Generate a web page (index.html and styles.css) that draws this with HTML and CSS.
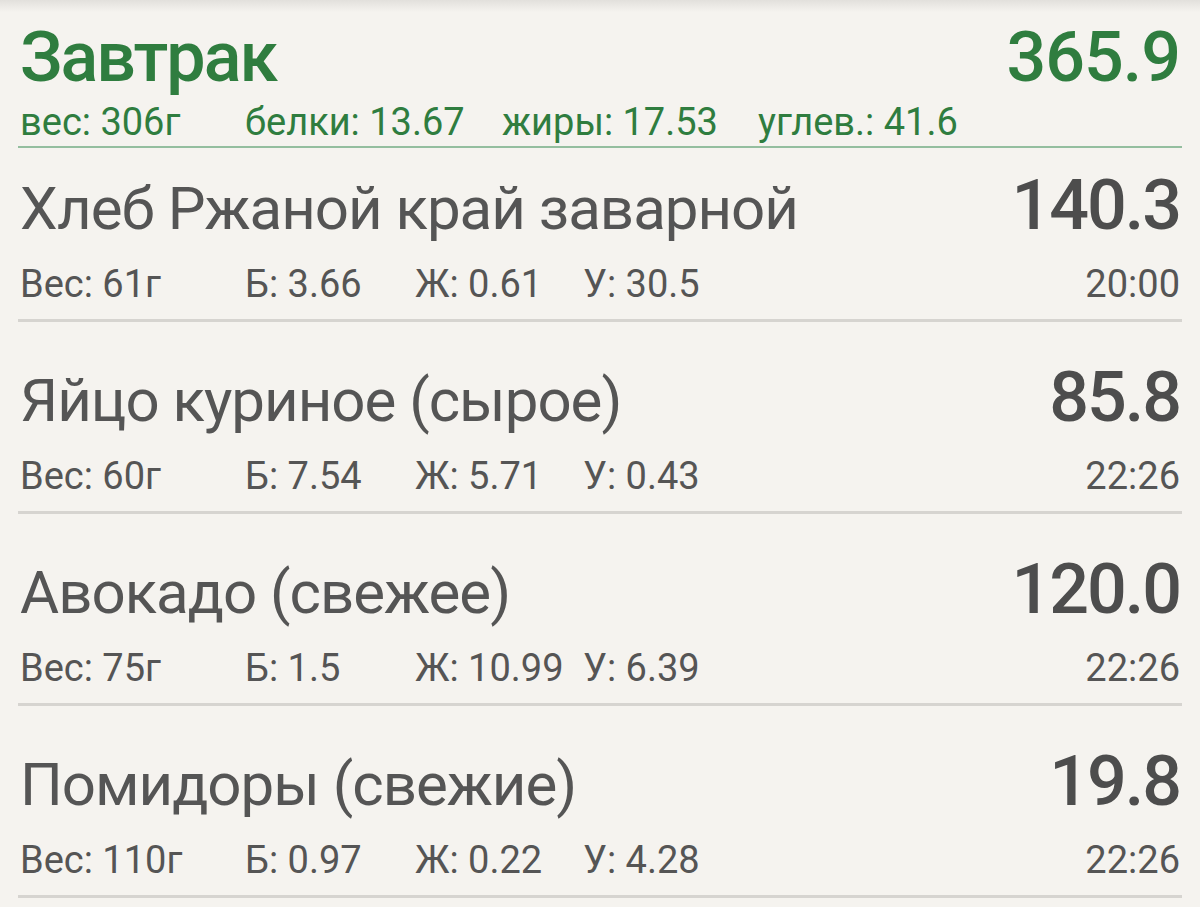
FILE: index.html
```html
<!DOCTYPE html>
<html lang="ru">
<head>
<meta charset="utf-8">
<title>Завтрак</title>
<link rel="stylesheet" href="styles.css">
</head>
<body>
<div class="page">
  <header class="meal">
    <div class="meal-top">
      <h1 class="meal-title">Завтрак</h1>
      <div class="meal-kcal">365.9</div>
    </div>
    <div class="meal-stats">
      <span>вес: 306г</span>
      <span>белки: 13.67</span>
      <span>жиры: 17.53</span>
      <span>углев.: 41.6</span>
    </div>
  </header>
  <ul class="items">
    <li class="item">
      <div class="item-top"><span class="item-name">Хлеб Ржаной край заварной</span><span class="item-kcal">140.3</span></div>
      <div class="item-meta"><span>Вес: 61г</span><span>Б: 3.66</span><span>Ж: 0.61</span><span>У: 30.5</span><span class="time">20:00</span></div>
    </li>
    <li class="item">
      <div class="item-top"><span class="item-name">Яйцо куриное (сырое)</span><span class="item-kcal">85.8</span></div>
      <div class="item-meta"><span>Вес: 60г</span><span>Б: 7.54</span><span>Ж: 5.71</span><span>У: 0.43</span><span class="time">22:26</span></div>
    </li>
    <li class="item">
      <div class="item-top"><span class="item-name">Авокадо (свежее)</span><span class="item-kcal">120.0</span></div>
      <div class="item-meta"><span>Вес: 75г</span><span>Б: 1.5</span><span>Ж: 10.99</span><span>У: 6.39</span><span class="time">22:26</span></div>
    </li>
    <li class="item">
      <div class="item-top"><span class="item-name">Помидоры (свежие)</span><span class="item-kcal">19.8</span></div>
      <div class="item-meta"><span>Вес: 110г</span><span>Б: 0.97</span><span>Ж: 0.22</span><span>У: 4.28</span><span class="time">22:26</span></div>
    </li>
  </ul>
</div>
</body>
</html>
```
FILE: styles.css
```css
html, body {
  margin: 0;
  padding: 0;
  background: #f5f3ef;
}
body {
  font-family: Roboto, "Noto Sans", sans-serif;
  color: #555555;
  background: linear-gradient(#e2e0dc 0, #f5f3ef 12px) no-repeat, #f5f3ef;
  min-height: 907px;
}
.page {
  padding: 0 18px;
}
.meal {
  padding-top: 22px;
  border-bottom: 2px solid #94be9f;
  padding-bottom: 2px;
  color: #2f7d3f;
}
.meal-top {
  display: flex;
  justify-content: space-between;
  align-items: baseline;
  height: 70px;
  padding: 0 2px;
}
.meal-title {
  margin: 0;
  font-size: 70px;
  line-height: 70px;
  font-weight: 500;
  letter-spacing: -2px;
}
.meal-kcal {
  font-size: 70px;
  line-height: 70px;
  font-weight: 500;
  letter-spacing: -1px;
}
.meal-stats {
  display: grid;
  grid-template-columns: 225px 257px 256px 1fr;
  margin-top: 8px;
  padding: 0 2px;
  font-size: 38px;
  line-height: 44px;
}
.items {
  list-style: none;
  margin: 0;
  padding: 0;
}
.item {
  padding: 40px 2px 13px;
  border-bottom: 3px solid #d6d4d0;
}
.item:first-child {
  padding-top: 22px;
}
.item-top {
  display: flex;
  justify-content: space-between;
  align-items: baseline;
  height: 70px;
  line-height: 70px;
}
.item-name {
  font-size: 60px;
  letter-spacing: -1px;
}
.item-kcal {
  font-size: 70px;
  font-weight: 500;
  letter-spacing: -2px;
  color: #4d4d4d;
}
.item-meta {
  display: grid;
  grid-template-columns: 225px 170px 168px 1fr auto;
  margin-top: 22px;
  font-size: 38px;
  line-height: 44px;
}
.time {
  text-align: right;
}
```
